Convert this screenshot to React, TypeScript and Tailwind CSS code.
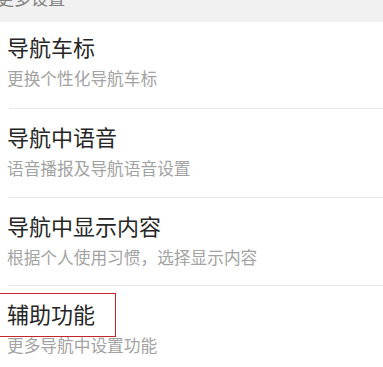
const items = [
  { title: "导航车标", desc: "更换个性化导航车标" },
  { title: "导航中语音", desc: "语音播报及导航语音设置" },
  { title: "导航中显示内容", desc: "根据个人使用习惯，选择显示内容" },
  { title: "辅助功能", desc: "更多导航中设置功能", marked: true },
];

export default function App() {
  return (
    <div
      className="h-[367px] w-[383px] overflow-hidden bg-white"
      style={{ fontFamily: '"Noto Sans CJK SC", "Noto Sans", sans-serif' }}
    >
      <div className="h-[22px] overflow-hidden bg-[#f1f1f1]">
        <div className="-ml-[3px] -mt-[11px] text-[17px] leading-[17px] text-[#808080]">
          更多设置
        </div>
      </div>
      <div className="pl-[9px]">
        {items.map((item, i) => (
          <div
            key={item.title}
            className={`relative ${
              i === 0
                ? "h-[86px] pt-[13px]"
                : i === 1
                  ? "h-[89px] border-t border-[#e8e8e8] pt-[16px]"
                  : "h-[88px] border-t border-[#e8e8e8] pt-[16px]"
            }`}
          >
            <div className="-ml-[2px] text-[22px] leading-[22px] text-[#262626]">
              {item.title}
            </div>
            <div className="-ml-[2px] mt-[13px] text-[16.7px] leading-[17px] text-[#a3a3a3]">
              {item.desc}
            </div>
            {item.marked && (
              <div className="absolute -left-[12px] top-[7px] h-[44px] w-[119px] border-[1.5px] border-[#c0272d]" />
            )}
          </div>
        ))}
      </div>
    </div>
  );
}
